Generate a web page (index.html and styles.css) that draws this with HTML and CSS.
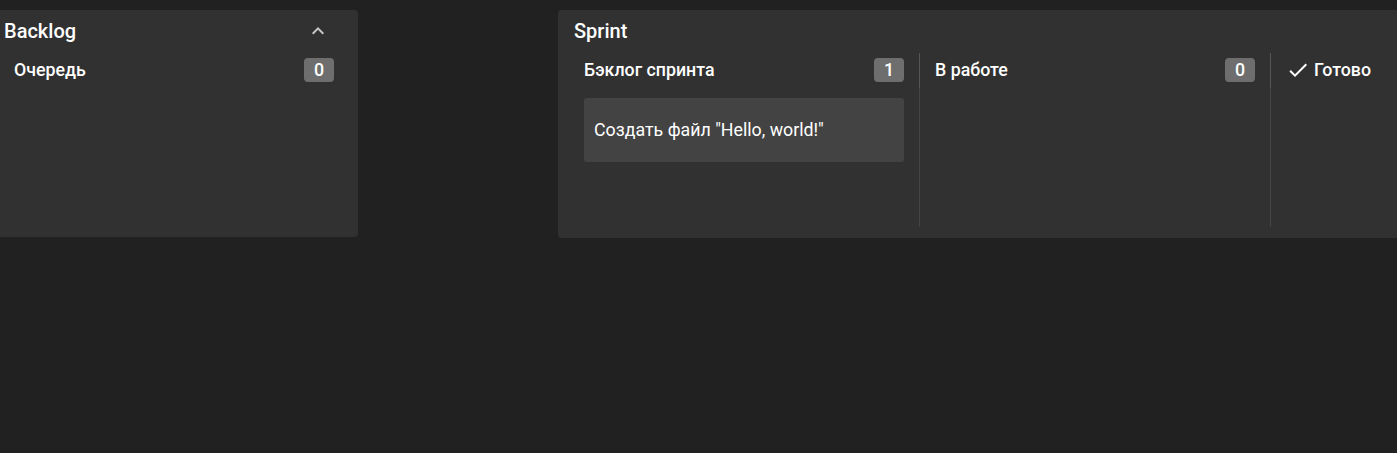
FILE: index.html
```html
<!DOCTYPE html>
<html lang="ru">
<head>
<meta charset="utf-8">
<title>Board</title>
<link rel="stylesheet" href="styles.css">
</head>
<body>
<div class="board">
  <section class="panel">
    <header class="panel-head">
      <h2 class="panel-title">Backlog</h2>
      <svg class="chevron" viewBox="0 0 24 24" width="24" height="24"><path d="M12 8l-6 6 1.41 1.41L12 10.83l4.59 4.58L18 14z"/></svg>
    </header>
    <div class="columns">
      <div class="column column-first">
        <div class="col-head">
          <span class="col-title">Очередь</span>
          <span class="badge">0</span>
        </div>
        <div class="col-body"></div>
      </div>
    </div>
  </section>
  <section class="panel panel-sprint">
    <header class="panel-head">
      <h2 class="panel-title">Sprint</h2>
    </header>
    <div class="columns">
      <div class="column column-first">
        <div class="col-head">
          <span class="col-title">Бэклог спринта</span>
          <span class="badge">1</span>
        </div>
        <div class="col-body">
          <div class="card">Создать файл "Hello, world!"</div>
        </div>
      </div>
      <div class="column">
        <div class="col-head">
          <span class="col-title">В работе</span>
          <span class="badge">0</span>
        </div>
        <div class="col-body"></div>
      </div>
      <div class="column">
        <div class="col-head">
          <span class="col-title col-done"><svg class="check" viewBox="0 0 24 24" width="24" height="24"><path d="M9 16.17L4.83 12l-1.42 1.41L9 19 21 7l-1.41-1.41z"/></svg>Готово</span>
        </div>
        <div class="col-body"></div>
      </div>
    </div>
  </section>
</div>
</body>
</html>
```
FILE: styles.css
```css
html, body {
  margin: 0;
  padding: 0;
  background: #212121;
  overflow: hidden;
}
body {
  font-family: Roboto, "Noto Sans", sans-serif;
  color: #fff;
  width: 1397px;
  height: 453px;
}
.board {
  display: flex;
  align-items: flex-start;
  gap: 200px;
  padding-top: 10px;
  margin-left: -12px;
}
.panel {
  flex: none;
  background: #313131;
  border-radius: 4px;
  padding: 0 9px 10px 10px;
}
.panel-sprint {
  padding-bottom: 11px;
}
.panel-head {
  display: flex;
  align-items: center;
  justify-content: space-between;
  padding: 7px 6px 8px 6px;
  height: 28px;
}
.panel-title {
  margin: 0;
  font-size: 20px;
  line-height: 28px;
  font-weight: 500;
}
.chevron {
  fill: #c8c8c8;
  margin-right: 13px;
}
.columns {
  display: flex;
}
.column {
  width: 320px;
  padding: 0 15px 0 16px;
  display: flex;
  flex-direction: column;
}
.col-head {
  display: flex;
  align-items: center;
  justify-content: space-between;
  padding: 5px 15px 6px;
  margin: 0 -15px 0 -16px;
  border-left: 1px solid #555;
}
.col-body {
  margin: 0 -15px 0 -16px;
  padding: 10px 15px 0;
  min-height: 129px;
  border-left: 1px solid #444;
}
.column-first .col-head,
.column-first .col-body {
  border-left-color: transparent;
}
.col-title {
  font-size: 17.8px;
  line-height: 24px;
  font-weight: 500;
}
.col-done {
  display: flex;
  align-items: center;
  gap: 4px;
}
.check {
  fill: #fff;
}
.badge {
  width: 30px;
  height: 24px;
  border-radius: 4px;
  background: #6e6e6e;
  text-align: center;
  font-size: 17.8px;
  line-height: 24px;
  font-weight: 500;
}
.card {
  background: #434343;
  border-radius: 3px;
  padding: 20px 10px;
  font-size: 17.8px;
  line-height: 24px;
}
```
